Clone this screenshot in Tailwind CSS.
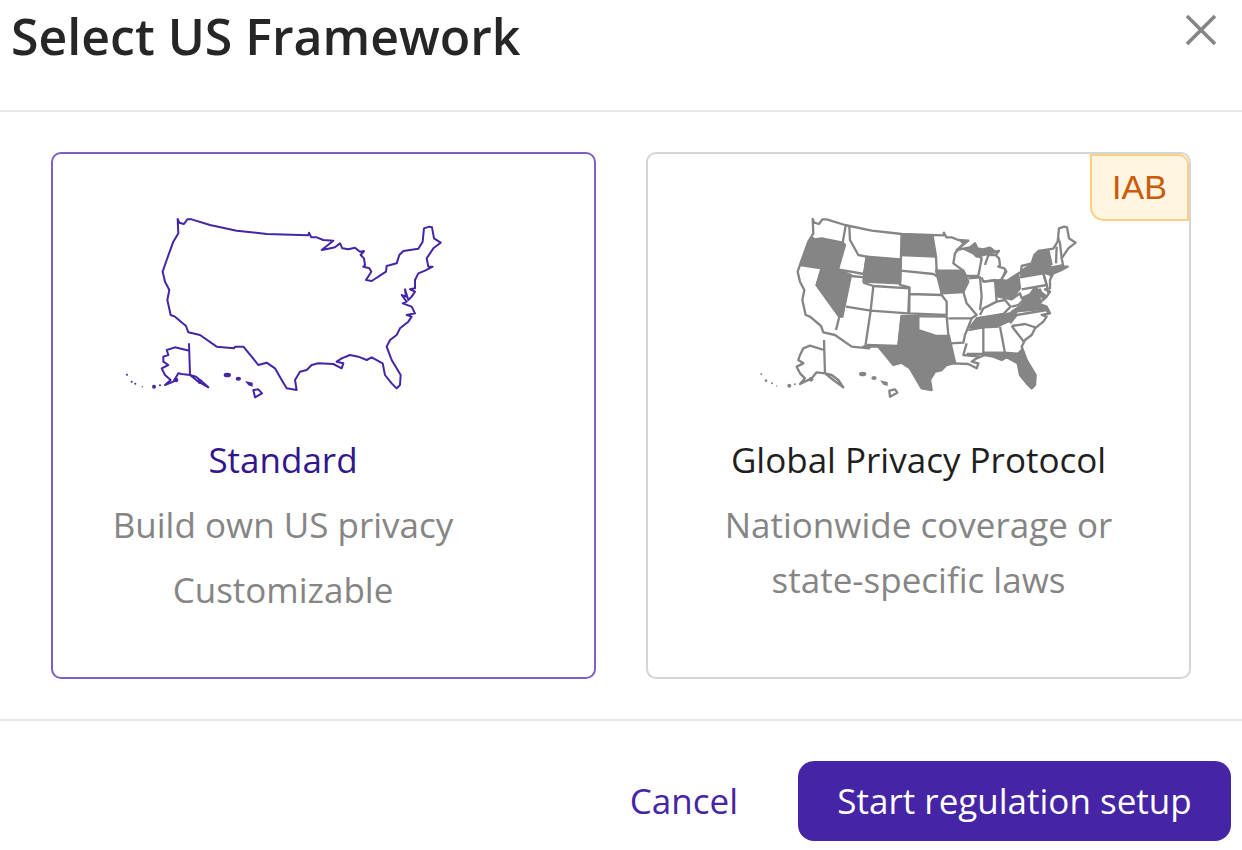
<!DOCTYPE html>
<html lang="en">
<head>
    <meta charset="UTF-8">
    <title>Select US Framework</title>
    <script src="https://cdn.jsdelivr.net/npm/@tailwindcss/browser@4"></script>
</head>
<body class="bg-white font-['Open_Sans',sans-serif] w-[1242px] h-[850px] overflow-hidden">
    <!-- Header -->
    <header class="h-[112px] border-b-2 border-[#e8e8e8] flex justify-between items-start pl-[11px] pr-[25px]">
        <h1 class="text-[50px] leading-[72px] font-semibold text-[#262626]">Select US Framework</h1>
        <button class="mt-[14px]">
            <svg class="block w-[32px] h-[32px] text-[#858585]" viewBox="0 0 32 32" fill="none" stroke="currentColor" stroke-width="3.6"><path d="M2 2 30 30M30 2 2 30"/></svg>
        </button>
    </header>

    <!-- Cards -->
    <main class="h-[609px] border-b-2 border-[#e8e8e8] flex gap-[50px] pl-[51px] pt-[40px]">
        <div class="w-[545px] h-[527px] border-2 border-[#7e5fc6] rounded-[10px] bg-white">
            <div class="w-[460px]">
                <svg class="block ml-[57px] mt-[46px] w-[350px] h-[210px] text-[#4524a6]" viewBox="0 0 1050 630" fill="none" stroke="currentColor" stroke-width="6" stroke-linejoin="round">
                    <path d="M203,57 L208,68 L222,72 L232,58 L245,58 L300,75 L380,92 L470,102 L595,106 L597,98 L604,112 L620,112 L640,120 L670,122 L635,150 L655,146 L675,142 L690,130 L697,145 L715,148 L735,143 L750,155 L762,153 L752,165 L762,175 L765,195 L760,200 L778,205 L784,215 L768,240 L785,243 L828,215 L830,198 L860,190 L868,165 L880,153 L925,146 L938,125 L942,85 L958,80 L966,82 L972,115 L992,128 L970,145 L950,175 L955,200 L968,200 L945,212 L925,220 L915,240 L915,265 L900,268 L915,275 L905,290 L895,300 L885,268 L888,290 L875,285 L890,305 L878,310 L905,320 L915,340 L890,345 L905,350 L895,365 L870,385 L860,405 L840,420 L830,440 L845,480 L872,525 L870,555 L860,565 L845,550 L825,525 L818,490 L785,472 L770,480 L745,470 L720,465 L695,475 L680,485 L700,490 L695,505 L670,492 L625,490 L605,495 L590,510 L570,515 L555,540 L560,570 L530,565 L515,540 L495,505 L470,488 L445,495 L425,470 L400,440 L375,440 L372,445 L320,440 L270,405 L235,397 L228,378 L195,350 L182,345 L172,300 L178,270 L165,245 L158,215 L170,180 L190,125 L205,100 Z"/>
                    <path d="M237,430 L240,525 L258,530 L280,548 L295,562 L265,545 L240,525 L215,522 L205,520 L190,545 L165,555 L182,540 L165,525 L155,505 L175,495 L160,485 L160,470 L175,465 L170,450 L195,442 L238,452"/>
                    <path d="M430,570 L445,568 L456,580 L435,592 Z"/>
                    <g fill="currentColor" stroke="none">
                        <ellipse cx="352" cy="525" rx="11" ry="7"/><ellipse cx="385" cy="536" rx="8" ry="6"/><path d="M405,543 L428,548 L428,560 L415,556 Z"/>
                        <circle cx="51" cy="524" r="3"/><circle cx="65" cy="545" r="3"/><circle cx="76" cy="551" r="3"/><circle cx="97" cy="560" r="2"/><circle cx="132" cy="560" r="6"/><circle cx="150" cy="556" r="3"/>
                        <circle cx="198" cy="540" r="7"/><circle cx="270" cy="545" r="7"/>
                    </g>
                </svg>
                <div class="text-center">
                    <h2 class="mt-[22px] text-[35px] leading-[55px] text-[#32168c]">Standard</h2>
                    <p class="mt-[10px] text-[35px] leading-[55px] text-[#858585]">Build own US privacy</p>
                    <p class="mt-[10px] text-[35px] leading-[55px] text-[#858585]">Customizable</p>
                </div>
            </div>
        </div>

        <div class="relative w-[545px] h-[527px] border-2 border-[#d5d5d5] rounded-[10px] bg-white">
            <span class="absolute top-0 right-0 w-[99px] h-[67px] flex items-center justify-center bg-[#fff5e1] border-2 border-[#fdcf85] rounded-tr-[10px] rounded-bl-[14px] font-['Liberation_Sans',sans-serif] text-[34px] text-[#cc5a06]">IAB</span>
            <svg class="block ml-[102px] mt-[46px] w-[340px] h-[210px] text-[#858585]" viewBox="0 0 1020 630" fill="none" stroke="currentColor" stroke-width="7" stroke-linejoin="round">
                <defs>
                    <clipPath id="usa"><path d="M188,57 L193,68 L207,72 L217,58 L230,58 L285,75 L365,92 L455,102 L580,106 L582,98 L589,112 L605,112 L625,120 L655,122 L620,150 L640,146 L660,142 L675,130 L682,145 L700,148 L720,143 L735,155 L747,153 L737,165 L747,175 L750,195 L745,200 L763,205 L769,215 L753,240 L770,243 L813,215 L815,198 L845,190 L853,165 L865,153 L910,146 L923,125 L927,85 L943,80 L951,82 L957,115 L977,128 L955,145 L935,175 L940,200 L953,200 L930,212 L910,220 L900,240 L900,265 L885,268 L900,275 L890,290 L880,300 L870,268 L873,290 L860,285 L875,305 L863,310 L890,320 L900,340 L875,345 L890,350 L880,365 L855,385 L845,405 L825,420 L815,440 L830,480 L857,525 L855,555 L845,565 L830,550 L810,525 L803,490 L770,472 L755,480 L730,470 L705,465 L680,475 L665,485 L685,490 L680,505 L655,492 L610,490 L590,495 L575,510 L555,515 L540,540 L545,570 L515,565 L500,540 L480,505 L455,488 L430,495 L410,470 L385,440 L360,440 L357,445 L305,440 L255,405 L220,397 L213,378 L180,350 L167,345 L157,300 L163,270 L150,245 L143,215 L155,180 L175,125 L190,100 Z"/></clipPath>
                </defs>
                <g clip-path="url(#usa)">
                    <!-- filled states: OR NV WY ND IA TX MI OH TN VA NY FL -->
                    <g fill="currentColor">
                        <path d="M170,108 L195,118 L215,115 L278,128 L285,135 L264,208 L215,205 L130,192 Z"/>
                        <path d="M215,205 L264,208 L303,225 L277,350 L268,350 L200,255 Z"/>
                        <path d="M350,170 L452,178 L450,250 L340,245 Z"/>
                        <path d="M455,90 L545,90 L558,170 L453,165 Z"/>
                        <path d="M558,212 L640,212 L655,245 L640,276 L575,280 Z"/>
                        <path d="M455,350 L505,350 L505,390 L560,408 L597,408 L610,465 L640,600 L360,600 L340,440 L445,438 Z"/>
                        <path d="M630,120 L680,125 L700,140 L760,150 L700,165 L680,170 Z"/>
                        <path d="M737,243 L770,240 L805,225 L810,265 L785,298 L745,290 Z"/>
                        <path d="M660,382 L680,355 L760,345 L800,335 L785,360 L745,378 Z"/>
                        <path d="M785,335 L812,318 L835,290 L855,262 L890,290 L900,325 Z"/>
                        <path d="M810,215 L850,190 L855,160 L890,145 L900,190 L905,225 L880,218 L815,228 Z"/>
                        <path d="M890,205 L955,192 L955,212 L905,232 Z"/>
                        <path d="M700,458 L760,458 L805,461 L825,440 L880,600 L770,600 L730,470 Z"/>
                    </g>
                    <!-- outlined states -->
                    <path d="M290,60 L278,128 M195,118 L170,108"/>
                    <path d="M215,205 L200,255 L268,350 L258,390"/>
                    <path d="M298,80 L300,120 L325,165 L350,170 L342,222 L264,208"/>
                    <path d="M303,228 L345,232 M340,248 L370,258 L362,332 L288,320"/>
                    <path d="M370,258 L478,265 L475,340 L362,332 L345,445"/>
                    <path d="M455,345 L445,438 L350,435"/>
                    <path d="M453,165 L452,212 L450,255 L478,262 L478,282 L575,285 L590,305 L590,345 L475,340 M478,282 L478,340"/>
                    <path d="M452,212 L550,222 L570,235 L575,285"/>
                    <path d="M558,170 L560,212"/>
                    <path d="M455,348 L590,350 L595,405 L597,420"/>
                    <path d="M650,120 L615,160 L610,190 L640,212 L650,232"/>
                    <path d="M640,276 L650,310 L680,345 L665,355 L595,355"/>
                    <path d="M665,355 L645,405 L640,428 L600,430"/>
                    <path d="M650,430 L640,465 L690,470"/>
                    <path d="M655,235 L690,232 L695,290 L690,330"/>
                    <path d="M640,145 L680,165 L695,175 L685,228 L650,228"/>
                    <path d="M705,195 L715,165 L745,165 L770,205 L755,240 L700,245 L695,232"/>
                    <path d="M700,245 L735,240 L740,305 L700,325 L690,345"/>
                    <path d="M740,305 L765,300 L782,320 L760,342 L680,355"/>
                    <path d="M785,298 L810,280 L815,295 L835,285 L805,315 L785,320"/>
                    <path d="M810,232 L880,220 L890,255 L815,268"/>
                    <path d="M780,370 L800,345 L890,330 L900,350"/>
                    <path d="M785,378 L825,372 L865,385 M785,378 L825,430"/>
                    <path d="M750,380 L765,460"/>
                    <path d="M700,382 L700,465 M655,390 L700,382 L745,380 M650,462 L700,462"/>
                    <path d="M895,150 L905,195 M920,140 L918,190 M920,100 L930,130 L935,175"/>
                    <path d="M880,220 L890,255 L900,300"/>
                </g>
                <path d="M188,57 L193,68 L207,72 L217,58 L230,58 L285,75 L365,92 L455,102 L580,106 L582,98 L589,112 L605,112 L625,120 L655,122 L620,150 L640,146 L660,142 L675,130 L682,145 L700,148 L720,143 L735,155 L747,153 L737,165 L747,175 L750,195 L745,200 L763,205 L769,215 L753,240 L770,243 L813,215 L815,198 L845,190 L853,165 L865,153 L910,146 L923,125 L927,85 L943,80 L951,82 L957,115 L977,128 L955,145 L935,175 L940,200 L953,200 L930,212 L910,220 L900,240 L900,265 L885,268 L900,275 L890,290 L880,300 L870,268 L873,290 L860,285 L875,305 L863,310 L890,320 L900,340 L875,345 L890,350 L880,365 L855,385 L845,405 L825,420 L815,440 L830,480 L857,525 L855,555 L845,565 L830,550 L810,525 L803,490 L770,472 L755,480 L730,470 L705,465 L680,475 L665,485 L685,490 L680,505 L655,492 L610,490 L590,495 L575,510 L555,515 L540,540 L545,570 L515,565 L500,540 L480,505 L455,488 L430,495 L410,470 L385,440 L360,440 L357,445 L305,440 L255,405 L220,397 L213,378 L180,350 L167,345 L157,300 L163,270 L150,245 L143,215 L155,180 L175,125 L190,100 Z"/>
                <path d="M222,420 L225,520 L245,525 L265,540 L280,562 L250,540 L225,520 L200,517 L185,535 L150,552 L165,535 L150,520 L140,500 L160,490 L145,480 L150,465 L160,445 L180,437 L222,450"/>
                <path d="M418,572 L435,568 L442,578 L420,590 Z"/>
                <g fill="currentColor" stroke="none">
                    <ellipse cx="338" cy="522" rx="11" ry="7"/><ellipse cx="372" cy="534" rx="8" ry="6"/><path d="M390,541 L413,546 L413,558 L400,554 Z"/>
                    <circle cx="34" cy="522" r="3"/><circle cx="48" cy="542" r="4"/><circle cx="66" cy="550" r="3"/><circle cx="80" cy="558" r="2"/><circle cx="118" cy="557" r="6"/><circle cx="135" cy="553" r="3"/>
                    <circle cx="183" cy="538" r="7"/>
                </g>
            </svg>
            <div class="text-center">
                <h2 class="mt-[22px] text-[35px] leading-[55px] text-[#1f1f1f]">Global Privacy Protocol</h2>
                <p class="mt-[10px] text-[35px] leading-[55px] text-[#858585]">Nationwide coverage or</p>
                <p class="text-[35px] leading-[55px] text-[#858585]">state-specific laws</p>
            </div>
        </div>
    </main>

    <!-- Footer -->
    <footer class="flex justify-end items-center gap-[60px] pt-[40px] pr-[11px]">
        <button class="text-[35px] text-[#4524a6]">Cancel</button>
        <button class="w-[433px] h-[80px] rounded-[16px] bg-[#4524a6] text-[35px] text-white">Start regulation setup</button>
    </footer>
</body>
</html>
